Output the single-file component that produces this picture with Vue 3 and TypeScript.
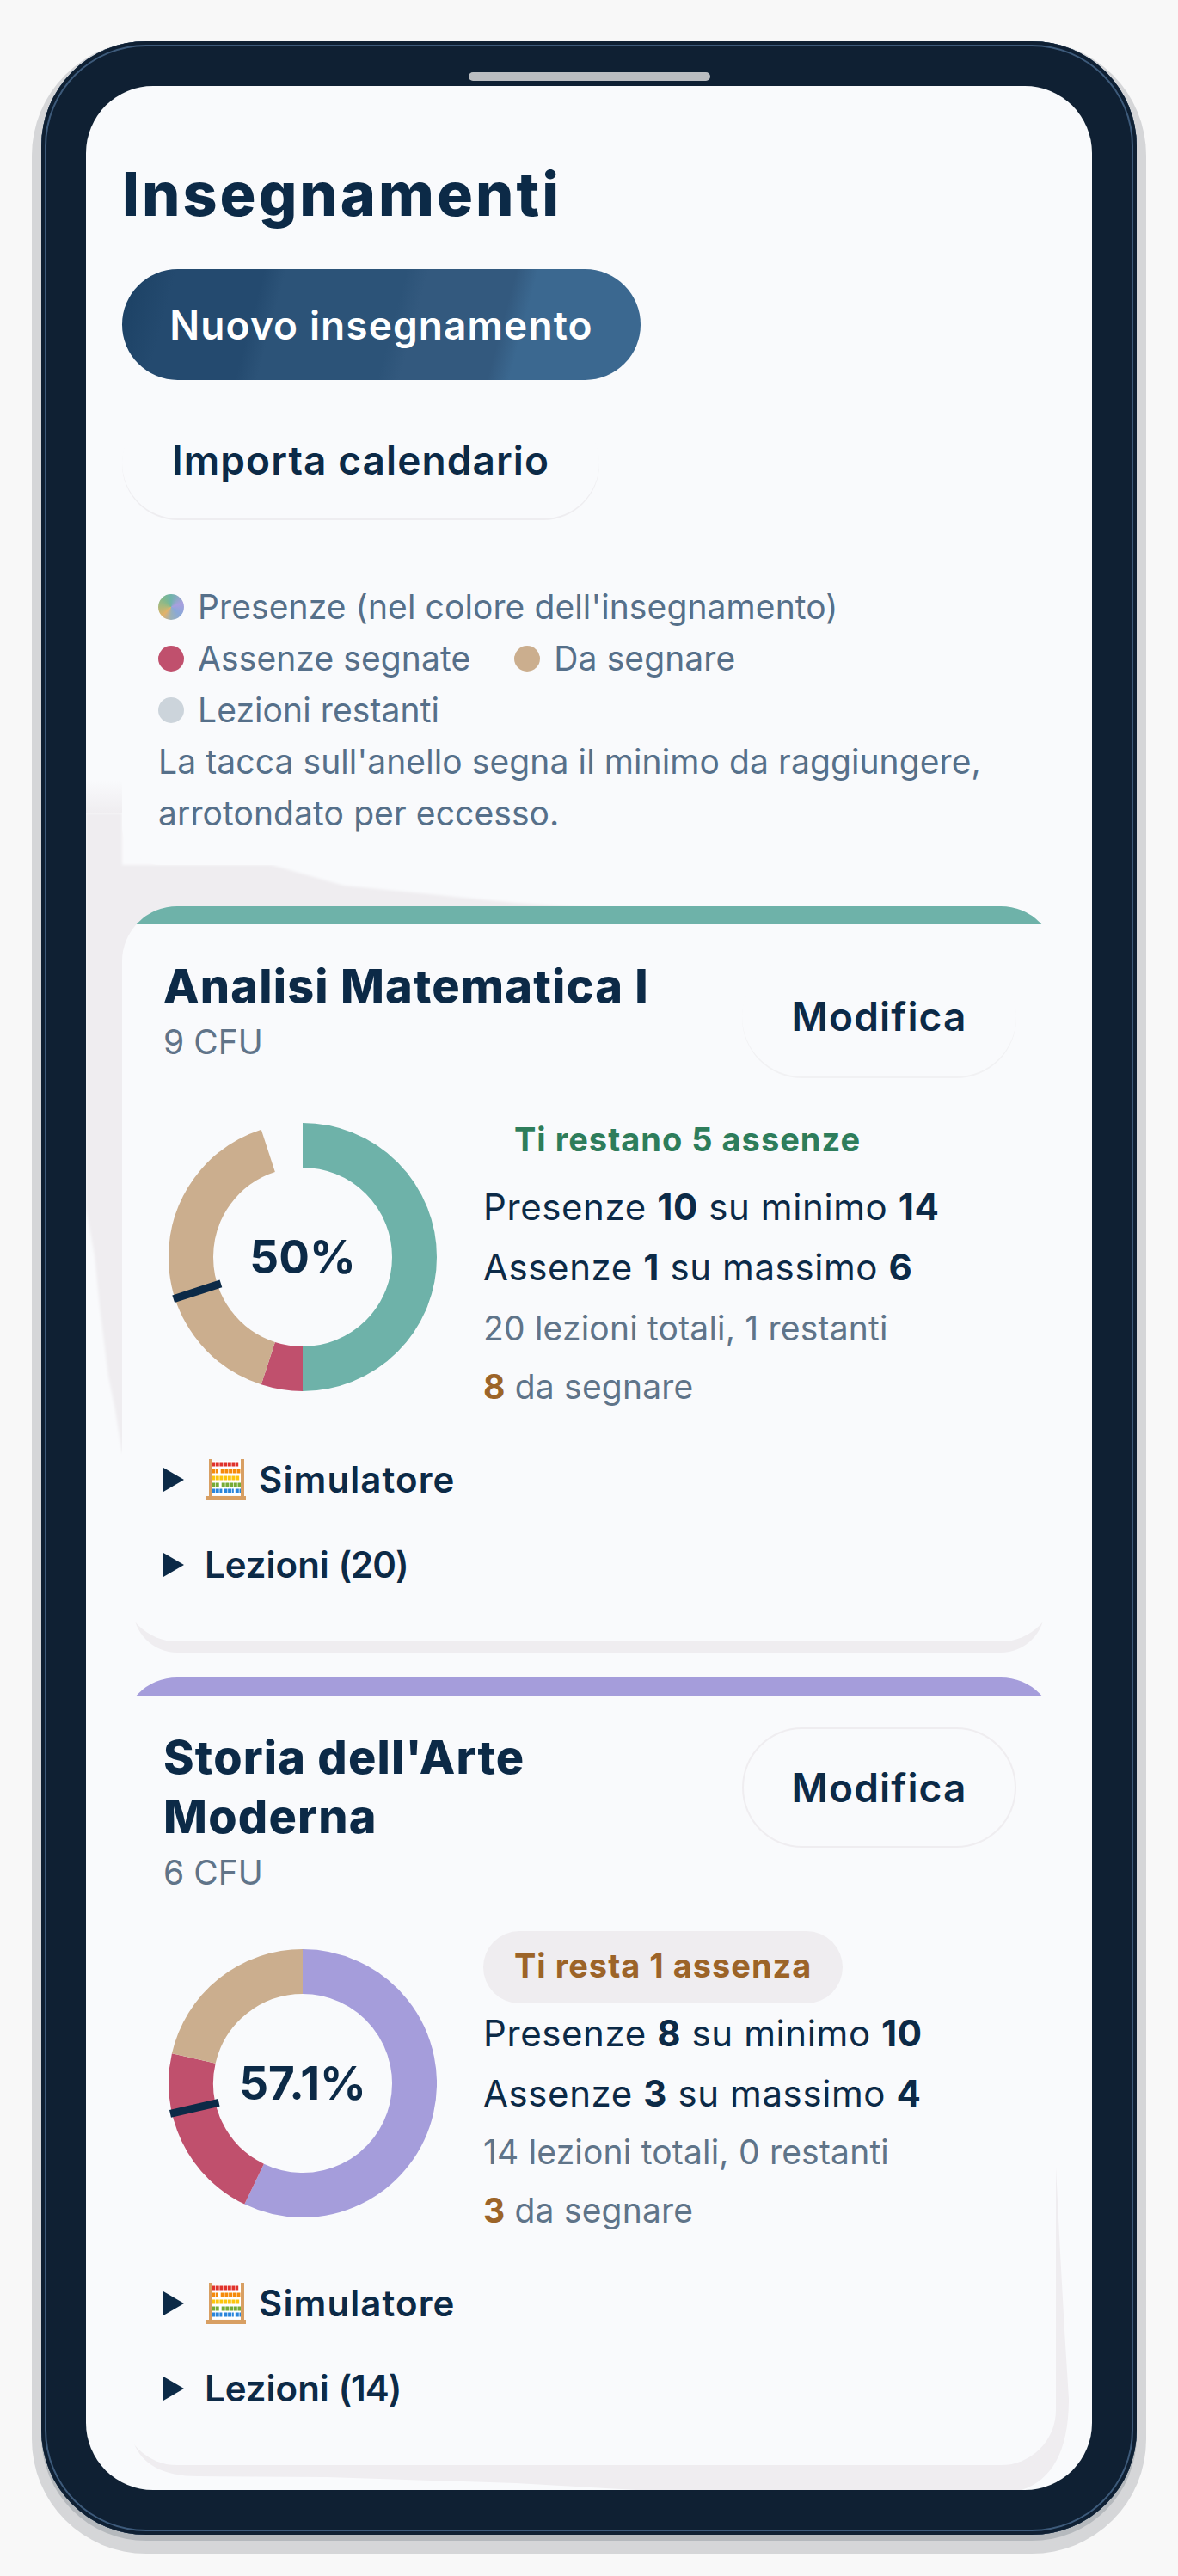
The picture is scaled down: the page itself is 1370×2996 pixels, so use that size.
<script setup lang="ts">
interface Segment {
  color: string
  from: number
  to: number
}

interface Course {
  name: string[]
  cfu: number
  percent: string
  pill: string
  pillTone: 'good' | 'warn'
  attended: number
  minimum: number
  absent: number
  maximum: number
  total: number
  remaining: number
  toMark: number
  accent: string
  segments: Segment[]
  tickAngle: number
}

const TEAL = '#6eb2a9'
const PURPLE = '#a59ddb'
const RED = '#c0506d'
const TAN = '#cbae8e'

const courses: Course[] = [
  {
    name: ['Analisi Matematica I'],
    cfu: 9,
    percent: '50%',
    pill: 'Ti restano 5 assenze',
    pillTone: 'good',
    attended: 10,
    minimum: 14,
    absent: 1,
    maximum: 6,
    total: 20,
    remaining: 1,
    toMark: 8,
    accent: TEAL,
    segments: [
      { color: TEAL, from: 0, to: 180 },
      { color: RED, from: 180, to: 198 },
      { color: TAN, from: 198, to: 342 },
    ],
    tickAngle: 252,
  },
  {
    name: ["Storia dell'Arte", 'Moderna'],
    cfu: 6,
    percent: '57.1%',
    pill: 'Ti resta 1 assenza',
    pillTone: 'warn',
    attended: 8,
    minimum: 10,
    absent: 3,
    maximum: 4,
    total: 14,
    remaining: 0,
    toMark: 3,
    accent: PURPLE,
    segments: [
      { color: PURPLE, from: 0, to: 205.7 },
      { color: RED, from: 205.7, to: 282.9 },
      { color: TAN, from: 282.9, to: 360 },
    ],
    tickAngle: 257.1,
  },
]

const point = (angle: number, r: number) => {
  const rad = (angle * Math.PI) / 180
  return { x: 156 + r * Math.sin(rad), y: 156 - r * Math.cos(rad) }
}

const arcPath = (seg: Segment) => {
  const a = point(seg.from, 130)
  const b = point(seg.to, 130)
  const large = seg.to - seg.from > 180 ? 1 : 0
  return `M${a.x} ${a.y}A130 130 0 ${large} 1 ${b.x} ${b.y}`
}

const tick = (angle: number) => {
  const a = point(angle, 100)
  const b = point(angle, 158)
  return { x1: a.x, y1: a.y, x2: b.x, y2: b.y }
}

const beadRows = [
  { y: 6, color: '#e0322c', dash: '4 .7 4 .7 4 .7 4 .7 4 .7 4 .7 3 3 4 .7 3' },
  { y: 14, color: '#f58a0b', dash: '4 .7 3 3 4 .7 4 .7 4 .7 4 .7 4 .7 4 .7 4' },
  { y: 22, color: '#fdc50c', dash: '4 .7 4 .7 4 .7 4 .7 4 .7 4 .7 4 3 3' },
  { y: 30, color: '#76ab37', dash: '4 .7 4 3 4 .7 4 .7 4 .7 4 .7 4 .7 4' },
  { y: 37, color: '#2a86dc', dash: '4 .7 4 .7 3 2 4 .7 4 .7 2 2 4 .7 4 .7 3' },
]
</script>

<template>
  <div class="page">
    <div class="phone">
      <div class="notch"></div>
      <main class="screen">
        <svg class="shade" width="1170" height="2796" viewBox="100 100 1170 2796" aria-hidden="true">
          <defs>
            <filter id="soft" x="-5%" y="-5%" width="110%" height="110%">
              <feGaussianBlur stdDeviation="1.5" />
            </filter>
            <linearGradient id="fade" x1="0" y1="0" x2="0" y2="1">
              <stop offset="0" stop-color="#efedf0" stop-opacity="0" />
              <stop offset="1" stop-color="#efedf0" />
            </linearGradient>
          </defs>
          <rect x="100" y="908" width="42" height="38" fill="url(#fade)" />
          <g fill="#efedf0">
            <path filter="url(#soft)" d="M100 946L142 946L142 1006L316 1006L400 1030L500 1040L600 1050L690 1056L300 1090L150 1090L160 1680L142 1690L134 1640L126 1600L121 1560L116 1520L110 1460L100 1405Z" />
            <path d="M1228 2520L1233 2620L1238 2710L1243 2790Q1243 2878 1188 2896L740 2896L600 2888L380 2881L230 2880Q170 2880 155 2840L200 2800L1200 2780Z" />
          </g>
        </svg>

        <h1 class="title">Insegnamenti</h1>
        <button class="btn btn-primary">Nuovo insegnamento</button>
        <button class="btn btn-soft">Importa calendario</button>

        <section class="legend">
          <div class="legend-row">
            <span class="legend-item"><i class="dot dot-mix"></i>Presenze (nel colore dell'insegnamento)</span>
          </div>
          <div class="legend-row">
            <span class="legend-item"><i class="dot dot-red"></i>Assenze segnate</span>
            <span class="legend-item"><i class="dot dot-tan"></i>Da segnare</span>
          </div>
          <div class="legend-row">
            <span class="legend-item"><i class="dot dot-grey"></i>Lezioni restanti</span>
          </div>
          <p class="legend-note">La tacca sull'anello segna il minimo da raggiungere, arrotondato per eccesso.</p>
        </section>

        <article v-for="course in courses" :key="course.cfu" class="card">
          <div class="card-bar" :style="{ background: course.accent }"></div>
          <header class="card-head">
            <div class="card-heading">
              <h2 class="card-name">
                <span v-for="line in course.name" :key="line" class="name-line">{{ line }}</span>
              </h2>
              <div class="card-cfu">{{ course.cfu }} CFU</div>
            </div>
            <button class="btn btn-edit" :class="course.pillTone">Modifica</button>
          </header>

          <div class="card-body">
            <div class="ring">
              <svg width="312" height="312" viewBox="0 0 312 312">
                <path
                  v-for="seg in course.segments"
                  :key="seg.from"
                  :d="arcPath(seg)"
                  fill="none"
                  :stroke="seg.color"
                  stroke-width="52"
                />
                <line v-bind="tick(course.tickAngle)" stroke="#0c2a47" stroke-width="9" />
              </svg>
              <span class="ring-label">{{ course.percent }}</span>
            </div>
            <div class="stats">
              <span class="pill" :class="course.pillTone">{{ course.pill }}</span>
              <p class="stat">Presenze <b>{{ course.attended }}</b> su minimo <b>{{ course.minimum }}</b></p>
              <p class="stat">Assenze <b>{{ course.absent }}</b> su massimo <b>{{ course.maximum }}</b></p>
              <p class="stat-sub first">{{ course.total }} lezioni totali, {{ course.remaining }} restanti</p>
              <p class="stat-sub"><b class="to-mark">{{ course.toMark }}</b> da segnare</p>
            </div>
          </div>

          <div class="fold">
            <span class="caret"></span>
            <svg class="abacus" width="46" height="48" viewBox="0 0 46 48">
              <rect x="7" y="2" width="33" height="40" fill="#fff" />
              <line
                v-for="row in beadRows"
                :key="row.y"
                x1="6"
                x2="41"
                :y1="row.y"
                :y2="row.y"
                :stroke="row.color"
                :stroke-dasharray="row.dash"
                stroke-width="5"
              />
              <rect x="3" y="0" width="4" height="44" fill="#d89f63" />
              <rect x="40" y="0" width="4" height="44" fill="#d89f63" />
              <rect x="0" y="43" width="46" height="5" fill="#d89f63" />
            </svg>
            <span class="sim-label">Simulatore</span>
          </div>
          <div class="fold">
            <span class="caret"></span>
            <span>Lezioni <span class="count">({{ course.total }})</span></span>
          </div>
        </article>
      </main>
    </div>
  </div>
</template>

<style scoped>
.page {
  width: 1370px;
  height: 2996px;
  box-sizing: border-box;
  padding: 48px;
  background: #f8f8f8;
  font-family: Inter, "Noto Sans", sans-serif;
  color: #0c2a47;
}

.phone {
  position: relative;
  box-sizing: border-box;
  width: 1274px;
  height: 2900px;
  padding: 52px;
  background: #0f2033;
  border-radius: 122px;
  box-shadow:
    inset 0 0 0 4px #0f2033,
    inset 0 0 0 6px #3d5a7a,
    0 7px 0 #b5b9bd,
    0 11px 0 11px #d5d6d8;
}

.notch {
  position: absolute;
  top: 36px;
  left: 497px;
  width: 281px;
  height: 10px;
  border-radius: 5px;
  background: #babdc1;
}

.screen {
  position: relative;
  box-sizing: border-box;
  height: 100%;
  overflow: hidden;
  padding: 84px 42px 0;
  border-radius: 78px;
  background: #f9fafc;
}

.shade {
  position: absolute;
  top: 0;
  left: 0;
}

.title {
  position: relative;
  margin: 0 0 45px;
  font-size: 70px;
  line-height: 84px;
  font-weight: 800;
  letter-spacing: 3px;
}

.btn {
  position: relative;
  display: block;
  border: 0;
  font-family: inherit;
  font-weight: 600;
  font-size: 46px;
  letter-spacing: 1.1px;
  color: #0c2a47;
  background: #f9fafc;
}

.btn-primary {
  width: 603px;
  height: 129px;
  border-radius: 65px;
  color: #fff;
  background: linear-gradient(105deg, #1b4063 0%, #244a6f 10%, #244a6f 26%, #2c5378 30%, #2c5378 52%, #33597e 56%, #33597e 72%, #3b6890 76%, #3b6890 100%);
}

.btn-soft {
  width: 555px;
  height: 130px;
  margin-top: 31px;
  padding-bottom: 8px;
  border-radius: 65px;
  box-shadow: 0 2px 0 #eeedf0;
}

.legend {
  position: relative;
  margin-top: 31px;
  padding: 42px 42px 30px;
  border-radius: 46px;
  background: #f9fafc;
  font-size: 39px;
  letter-spacing: 0.1px;
  line-height: 60px;
  color: #56708a;
}

.legend-row {
  display: flex;
  gap: 51px;
}

.legend-item {
  display: flex;
  align-items: center;
  gap: 16px;
}

.dot {
  width: 30px;
  height: 30px;
  border-radius: 50%;
}

.dot-mix {
  background: conic-gradient(#6fb3aa, #a89fdf 70deg, #8aa8d8 130deg, #9ab0b8 180deg, #e3b26a 225deg, #a8b97c 275deg, #7fb88f 320deg, #6fb3aa);
}

.dot-red {
  background: #c0506d;
}

.dot-tan {
  background: #cbae8e;
}

.dot-grey {
  background: #ccd4db;
}

.legend-note {
  margin: 0;
}

.card {
  position: relative;
  margin-top: 48px;
  overflow: hidden;
  padding: 0 46px 40px 48px;
  border-radius: 64px;
  background: #f9fafc;
}

.card:not(:last-child) {
  box-shadow: 0 26px 0 -13px #efedf0;
}

.card:last-child {
  margin-top: 42px;
}

.card:last-child .stat-sub.first {
  margin-top: -1px;
}

.card-bar {
  height: 21px;
  margin: 0 -46px 0 -48px;
}

.card-head {
  display: flex;
  justify-content: space-between;
  align-items: flex-start;
  padding-top: 37px;
}

.card-name {
  margin: 0;
  font-size: 54px;
  line-height: 69px;
  font-weight: 800;
  letter-spacing: 1.2px;
}

.name-line {
  display: block;
}

.card-cfu {
  margin-top: 6px;
  padding-bottom: 10px;
  font-size: 39px;
  line-height: 50px;
  color: #607489;
}

.btn-edit {
  flex: none;
  width: 319px;
  height: 140px;
  border-radius: 70px;
}

.btn-edit.good {
  box-shadow: 0 2px 0 #f1f1f3;
}

.btn-edit.warn {
  box-shadow: inset 0 0 0 2px #efedf0;
}

.card-body {
  display: flex;
  gap: 54px;
  margin-top: 54px;
  margin-left: 6px;
}

.ring {
  position: relative;
  flex: none;
  width: 312px;
  height: 312px;
}

.ring svg {
  display: block;
}

.ring-label {
  position: absolute;
  inset: 0;
  display: flex;
  align-items: center;
  justify-content: center;
  font-size: 53px;
  font-weight: 700;
}

.stats {
  margin-top: -21px;
  flex: 1;
  min-width: 0;
}

.pill {
  display: inline-block;
  height: 84px;
  padding: 0 36px;
  border-radius: 42px;
  font-size: 38px;
  letter-spacing: 1px;
  line-height: 80px;
  font-weight: 700;
}

.pill.good {
  color: #2e7d5b;
}

.pill.warn {
  color: #9c6428;
  background: #efedf0;
}

.stat {
  margin: 0;
  font-size: 42px;
  letter-spacing: 0.6px;
  line-height: 70px;
}

.stat b,
.to-mark {
  font-weight: 700;
}

.stat-sub {
  margin: 0;
  font-size: 39px;
  letter-spacing: 0.2px;
  line-height: 68px;
  color: #5f7489;
}

.stat-sub.first {
  margin-top: 2px;
}

.to-mark {
  color: #9c6428;
}

.fold {
  display: flex;
  align-items: center;
  height: 99px;
  font-size: 42px;
  font-weight: 600;
}

.card-body + .fold {
  margin-top: 24px;
}

.sim-label {
  letter-spacing: 1.1px;
}

.count {
  letter-spacing: -1px;
}

.caret {
  width: 0;
  height: 0;
  margin-right: 24px;
  border-left: 24px solid #0c2a47;
  border-top: 14px solid transparent;
  border-bottom: 14px solid transparent;
}

.abacus {
  margin: 0 15px 0 2px;
}
</style>

<style>
body {
  background: #f8f8f8;
}
</style>
